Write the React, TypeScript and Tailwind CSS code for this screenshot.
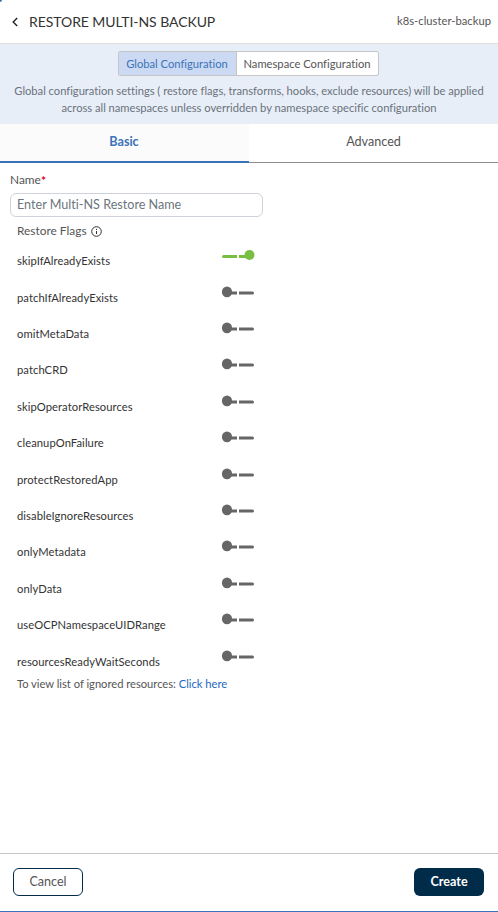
import React from "react";

const flags = [
  "skipIfAlreadyExists",
  "patchIfAlreadyExists",
  "omitMetaData",
  "patchCRD",
  "skipOperatorResources",
  "cleanupOnFailure",
  "protectRestoredApp",
  "disableIgnoreResources",
  "onlyMetadata",
  "onlyData",
  "useOCPNamespaceUIDRange",
  "resourcesReadyWaitSeconds",
];

function Toggle({ on }: { on: boolean }) {
  return on ? (
    <svg width="33" height="12" viewBox="0 0 33 12" className="overflow-visible text-[#78be43]" fill="currentColor">
      <path d="M1.5 5H15V8H1.5A1.5 1.5 0 0 1 1.5 5ZM17 5H26V8H17Z" />
      <circle cx="27.5" cy="5" r="5" />
    </svg>
  ) : (
    <svg width="33" height="12" viewBox="0 0 33 12" className="overflow-visible text-[#666]" fill="currentColor">
      <path d="M5 4.6H15V7.6H5ZM17 4.6H30.5A1.5 1.5 0 0 1 30.5 7.6H17Z" />
      <ellipse cx="5" cy="4.9" rx="5.1" ry="5.4" />
    </svg>
  );
}

export default function App() {
  return (
    <div className="relative flex h-[912px] w-[498px] flex-col overflow-hidden border-b border-[#3b73b9] bg-white font-['Lato',sans-serif] text-[#555] [font-variant-ligatures:no-common-ligatures]">
      <div className="absolute -left-[2px] -top-[2px] size-[4px] rounded-full bg-[#3b73b9]" />
      <header className="flex h-[44px] shrink-0 items-center border-b border-[#dedede] pl-3 pr-[7px]">
        <svg width="6" height="10" viewBox="0 0 6 10" fill="none" stroke="#222" strokeWidth="1.4">
          <path d="M5.2 1L1.2 5L5.2 9" />
        </svg>
        <h1 className="ml-[11px] text-[14px] leading-5 tracking-[-0.07px] text-[#333]">RESTORE MULTI-NS BACKUP</h1>
        <span className="ml-auto pb-px text-[11.2px] leading-4 tracking-[0.03px]">k8s-cluster-backup</span>
      </header>

      <section className="flex h-[80px] shrink-0 flex-col items-center bg-[#e7eef8] pt-[7px]">
        <div className="mr-[2px] flex h-[25px] w-[261px] rounded-[2px] border border-[#c6c6c6] bg-white text-[11.2px]">
          <button className="w-[118px] border-r border-[#c6c6c6] bg-[#cbdaf2] pt-px text-[#3b73b9]">Global Configuration</button>
          <button className="flex-1 pt-px">Namespace Configuration</button>
        </div>
        <p className="mt-[6px] whitespace-nowrap text-center text-[11.2px] leading-[17px] tracking-[-0.02px] text-[#6b727b]">
          Global configuration settings ( restore flags, transforms, hooks, exclude resources) will be applied
          <br />
          across all namespaces unless overridden by namespace specific configuration
        </p>
      </section>

      <nav className="flex h-[39px] shrink-0 text-[12.6px]">
        <button className="w-[249px] border-b-2 border-[#3b73b9] bg-[#fbfbfb] pr-px font-bold text-[#3b73b9]">Basic</button>
        <button className="flex-1 border-b border-[#8c8c8c] pb-px">Advanced</button>
      </nav>

      <main className="flex-1 pl-[10px] pt-[9px]">
        <label className="flex h-4 text-[11.9px] leading-4">
          Name<span className="pt-px font-bold text-[#e4002b]">*</span>
        </label>
        <input
          className="mt-[5px] block h-6 w-[253px] rounded-[6px] border border-[#ced2dc] px-[6px] pb-[2px] text-[12.6px] placeholder:text-[#6c757d] placeholder:opacity-100"
          placeholder="Enter Multi-NS Restore Name"
        />
        <div className="ml-[7px] mt-[6px] flex h-4 items-center text-[11.9px]">
          Restore Flags
          <svg className="ml-[4px]" width="11" height="11" viewBox="0 0 11 11" fill="none" stroke="#333">
            <circle cx="5.5" cy="5.5" r="4.8" />
            <path d="M5.5 5V8M5.5 2.8V4" />
          </svg>
        </div>
        <div className="ml-[7px] mt-[11px] pt-[0.2px]">
          {flags.map((flag, i) => (
            <div key={flag} className="flex h-[36.42px] w-[238px] items-start justify-between text-[11.2px] leading-4 tracking-[0.08px] text-[#333]">
              <span className="pt-[3px]">{flag}</span>
              <Toggle on={i === 0} />
            </div>
          ))}
        </div>
        <p className="-mt-[11px] ml-[7px] text-[11.2px] leading-4 tracking-[-0.02px]">
          To view list of ignored resources: <a className="text-[#2468c2]">Click here</a>
        </p>
      </main>

      <footer className="flex h-[58px] shrink-0 justify-between border-t border-[#c6c6c6] pl-[13px] pr-[14px] pt-[14px] text-[12.6px]">
        <button className="h-7 w-[70px] rounded-[6px] border border-[#002b49]">Cancel</button>
        <button className="h-7 w-[70px] rounded-[6px] bg-[#002b49] font-bold text-white">Create</button>
      </footer>
    </div>
  );
}
